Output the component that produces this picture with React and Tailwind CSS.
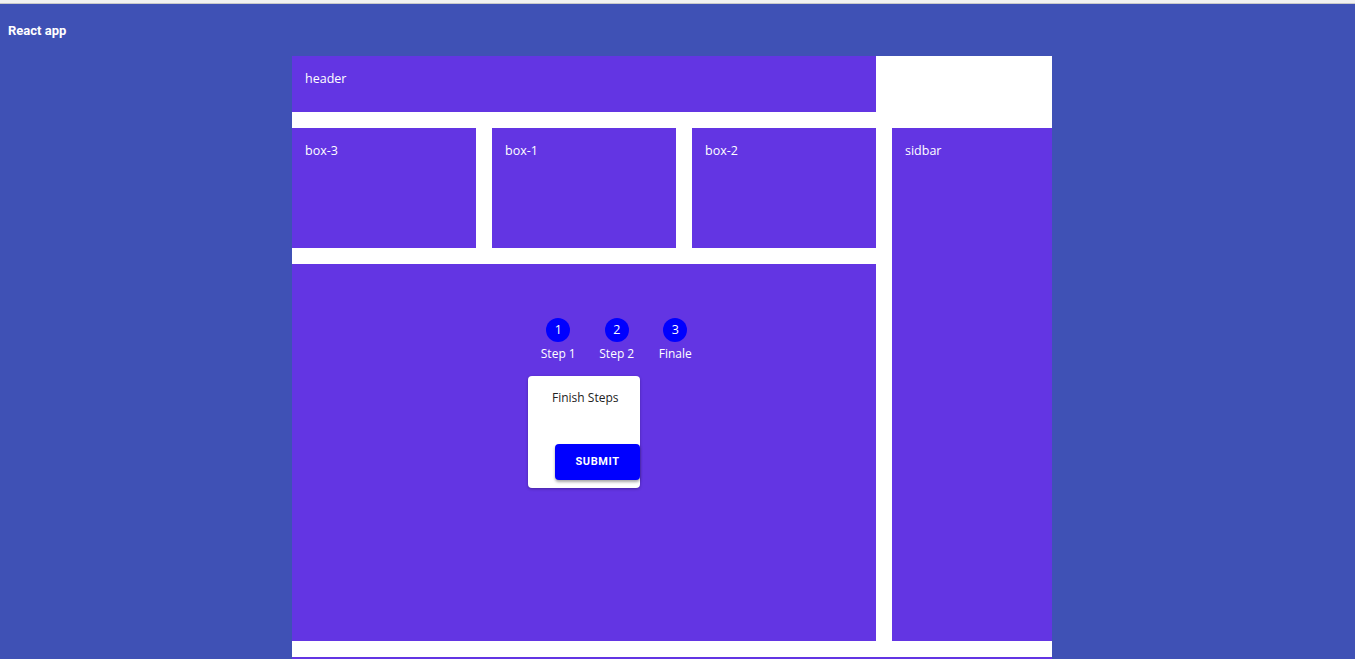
import React from "react";

const font = { fontFamily: '"Open Sans", "Noto Sans", sans-serif' };

function Box({ label, className = "" }) {
  return (
    <div className={`bg-[#6335e3] text-white text-[12.5px] pl-[13px] pt-[14px] ${className}`}>
      {label}
    </div>
  );
}

const steps = [
  { n: 1, label: "Step 1" },
  { n: 2, label: "Step 2" },
  { n: 3, label: "Finale" },
];

export default function App() {
  return (
    <div className="min-h-[659px] bg-[#3f51b5] flex flex-col" style={font}>
      {/* browser chrome strip */}
      <div className="h-[4px] bg-[#f1f1f1] border-b border-[#c9c9c9]" />

      <div className="px-[8px] pt-[17px] h-[52px] text-white text-[13px] font-bold font-['Roboto',sans-serif]">
        React app
      </div>

      <div className="w-[760px] ml-[292px] bg-white pb-[16px] grid grid-cols-[184px_184px_184px_160px] grid-rows-[56px_120px_377px] gap-[16px]">
        <Box label="header" className="col-span-3 pt-[14px]" />
        <div />
        <Box label="box-3" />
        <Box label="box-1" />
        <Box label="box-2" />
        <Box label="sidbar" className="row-span-2" />

        <div className="col-span-3 bg-[#6335e3] pt-[54px] flex flex-col">
          <div className="w-[112px] mx-auto">
            <div className="flex text-white text-[12px] w-[180px] pl-[1px]">
              {steps.map((s) => (
                <div key={s.n} className="w-[58.5px] shrink-0 flex flex-col items-center">
                  <div className="w-[24px] h-[24px] rounded-full bg-[#0000ff] flex items-center justify-center text-[12.5px] leading-none">
                    {s.n}
                  </div>
                  <div className="mt-[3px] leading-[18px]">{s.label}</div>
                </div>
              ))}
            </div>
          </div>

          <div className="mx-auto mt-[13px] w-[112px] h-[112px] bg-white rounded-[4px] shadow-[0_1px_3px_rgba(0,0,0,0.3)] flex flex-col">
            <div className="text-[12px] text-[#222] pl-[24px] pt-[13px] leading-[18px]">
              Finish Steps
            </div>
            <button className="ml-[27px] mt-[37px] w-[85px] h-[36px] bg-[#0000ff] text-white rounded-[4px] text-[11px] font-bold tracking-[0.6px] font-['Roboto',sans-serif] shadow-[0_2px_3px_rgba(0,0,0,0.35)]">
              SUBMIT
            </button>
          </div>
        </div>
      </div>

      <div className="w-[760px] ml-[292px] h-[2px] bg-[#6335e3]" />
    </div>
  );
}
